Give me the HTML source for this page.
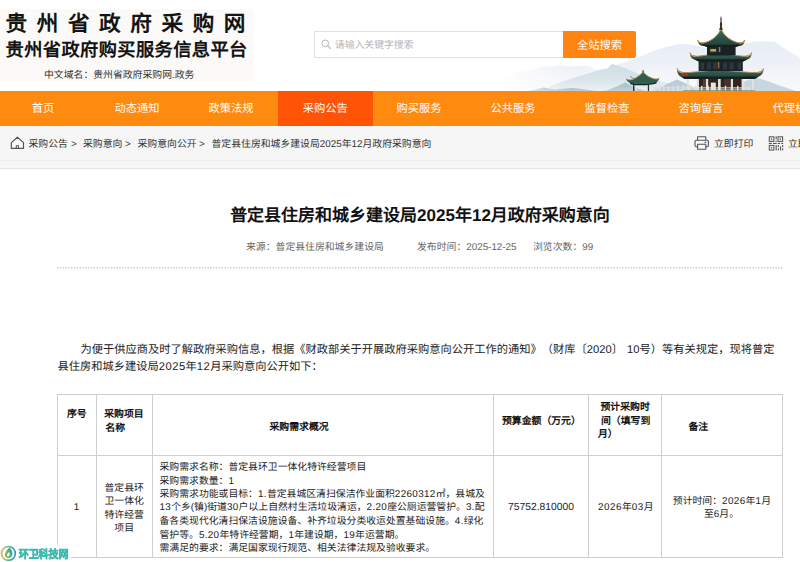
<!DOCTYPE html>
<html lang="zh-CN">
<head>
<meta charset="utf-8">
<title>普定县住房和城乡建设局2025年12月政府采购意向</title>
<style>
*{margin:0;padding:0;box-sizing:border-box;}
html,body{width:800px;height:562px;overflow:hidden;background:#fff;}
body{font-family:"Liberation Sans",sans-serif;color:#333;position:relative;text-rendering:geometricPrecision;text-spacing-trim:space-all;}
.abs{position:absolute;white-space:nowrap;}
/* header */
#hdr{position:absolute;left:0;top:0;width:800px;height:91px;background:#fff;overflow:hidden;}
#logobg{position:absolute;left:0;top:9px;width:253.5px;height:71.5px;background:#fbfaf8;}
#logo1{left:5.5px;top:9px;font-size:21.6px;font-weight:bold;color:#141414;letter-spacing:9.6px;line-height:30px;}
#logo2{left:5.5px;top:37px;font-size:18.2px;font-weight:bold;color:#141414;letter-spacing:0.44px;line-height:26px;}
#logo3{left:44px;top:68.5px;font-size:9.85px;color:#333;line-height:14px;}
#sbox{position:absolute;left:314px;top:31px;width:250px;height:27px;border:1px solid #dfe0e8;background:#fff;}
#sph{left:334.8px;top:39px;font-size:9.85px;color:#b4b5bd;line-height:14px;}
#sbtn{position:absolute;left:563px;top:31px;width:73px;height:26.5px;background:#ff8412;color:#fff;font-size:11.3px;line-height:30px;text-align:center;border-radius:0 2px 2px 0;overflow:hidden;}
/* nav */
#nav{position:absolute;left:0;top:91px;width:800px;height:35px;background:#ff8a10;overflow:hidden;}
#nav .it{position:absolute;top:0;height:35px;line-height:36px;color:#fff;font-size:11.25px;text-align:center;white-space:nowrap;}
#nav .act{background:#ff5306;}
/* crumb */
#crumb{position:absolute;left:0;top:126px;width:800px;height:35px;background:#f6f6f6;}
#gap{position:absolute;left:0;top:160px;width:800px;height:9px;background:#f6f6f6;border-top:1px solid #ececec;border-bottom:1px solid #e4e4e4;}
.ct{font-size:9.85px;color:#333;line-height:14px;top:138px;}
/* content */
#title{left:0;width:840px;text-align:center;top:205px;font-size:17px;font-weight:bold;color:#111;line-height:22px;}
.meta{font-size:9.85px;color:#666;line-height:14px;top:241px;}
#dash{position:absolute;left:57px;top:267.4px;width:726px;height:1px;background:repeating-linear-gradient(90deg,#cfcfcf 0,#cfcfcf 1.5px,transparent 1.5px,transparent 2.85px);}
.p{font-size:11.25px;color:#222;line-height:17px;}
/* table */
.vl,.hl{position:absolute;background:#cfcfcf;}
.vl{width:1px;top:394px;height:163px;}
.hl{height:1px;left:57px;width:726px;}
.th{font-size:9.86px;font-weight:bold;color:#111;line-height:14px;}
.td{font-size:9.86px;color:#222;line-height:13.45px;}
.dg{letter-spacing:0.35px;}
</style>
</head>
<body>
<div id="hdr">
  <div id="logobg"></div>
  <div class="abs" id="logo1">贵州省政府采购网</div>
  <div class="abs" id="logo2">贵州省政府购买服务信息平台</div>
  <div class="abs" id="logo3">中文域名：贵州省政府采购网.政务</div>
  <div id="sbox"></div>
  <svg class="abs" style="left:320px;top:38px;" width="12" height="12" viewBox="0 0 12 12"><circle cx="5.3" cy="5.4" r="3.4" fill="none" stroke="#b9bac2" stroke-width="1"/><path d="M7.8 7.9 L10.4 10.5" stroke="#b9bac2" stroke-width="1.1" stroke-linecap="round"/></svg>
  <div class="abs" id="sph">请输入关键字搜索</div>
  <!--SCENE_START--><svg class="abs" style="left:440px;top:0;" width="360" height="91" viewBox="440 0 360 91">
<defs>
<linearGradient id="gfar" x1="0" y1="0" x2="0" y2="1"><stop offset="0" stop-color="#e8edf6"/><stop offset="0.5" stop-color="#eef2f7"/><stop offset="1" stop-color="#f9fafc"/></linearGradient>
<linearGradient id="gmid" x1="0" y1="0" x2="0" y2="1"><stop offset="0" stop-color="#cedde6"/><stop offset="0.6" stop-color="#dae5eb"/><stop offset="1" stop-color="#ecf1f4"/></linearGradient>
<linearGradient id="gfr" x1="0" y1="0" x2="0" y2="1"><stop offset="0" stop-color="#a6bcc9"/><stop offset="1" stop-color="#c2d1da"/></linearGradient>
<linearGradient id="gleft" x1="0" y1="0" x2="1" y2="0"><stop offset="0" stop-color="#fff" stop-opacity="1"/><stop offset="1" stop-color="#fff" stop-opacity="0"/></linearGradient>
<linearGradient id="roof" x1="0" y1="0" x2="0" y2="1"><stop offset="0" stop-color="#3f6b5a"/><stop offset="1" stop-color="#1f3f36"/></linearGradient>
</defs>
<!-- far mountains -->
<path d="M496 91 L496 79 C508 75 518 72.5 527.5 70 L538 68 L547.5 66.2 L554 66.5 L560 65 L566 66 L572.5 66.2 L582 65.8 L590 66.2 L595 70 L603 69 L612 66 L625 62 L637.5 57.5 C650 52 668 45 682 43.7 C692 43.8 700 46.5 710 49 L722 50.5 C732 49 740 45 746 43.2 L755 41.6 L765 41.6 L774.7 42.1 L782 47 L792 53 L800 57.7 L800 91 Z" fill="url(#gfar)"/>
<!-- mid mountains -->
<path d="M545 91 L552.5 85 L570 79 L588 73.5 L600 70 L607.5 68.7 L610 65.5 L612.5 63.7 L616 65.5 L620 66.2 L630 70 L641 75 L655 80 L665 82.5 L680 86 L700 91 Z" fill="url(#gmid)"/>
<path d="M728 91 L738 84 L748 80 L757.3 78 L766 80.5 L778 85 L793 90 L796 91 Z" fill="#c8d6df"/>
<!-- front hills -->
<path d="M528 91 L532.5 90.3 L538 88.8 L543.7 87.5 L550 88.8 L555 89.5 L563 88.8 L572.5 88 L582 89 L590 90 L596 91 Z" fill="url(#gfr)"/>
<path d="M603 91 L607.5 90.2 L614 87.5 L620 85 L625 82.5 L631 85.5 L638 88.5 L646 91 Z" fill="url(#gfr)"/>
<path d="M652 91 L662 86.5 L670 82.5 L677 79.5 L684 82.5 L694 87.5 L702 91 Z" fill="#bccdd8"/>
<!-- fade on far left -->
<rect x="495" y="59.5" width="70" height="31.5" fill="url(#gleft)"/>
<!-- small pavilion -->
<g>
<rect x="633" y="84" width="1.4" height="7" fill="#2a3432"/><rect x="635.3" y="84.2" width="1.5" height="6.8" fill="#e6e3dc"/>
<rect x="647.8" y="84" width="1.3" height="7" fill="#2a3432"/><rect x="651" y="84.2" width="1.4" height="6.8" fill="#e6e3dc"/>
<path d="M629 81.6 C634 84.8 652 84.6 657.3 80.8 L656.3 83.6 C650 85.8 636 85.9 630.5 84.2 Z" fill="#172322"/>
<path d="M626.1 78.9 C628.5 80.6 632 80.2 635 78.4 C638.5 76.3 641.3 74.3 642.6 72.6 L643.1 70.3 L643.7 72.6 C645.5 75 649.5 77.6 653.5 78.7 C655.8 79.3 657.8 79.2 659.2 78.2 C658.9 80.2 657.6 81.6 655.6 82.4 C649 84.4 637 84.6 631 83 C628.3 82.2 626.6 80.8 626.1 78.9 Z" fill="#2f5e4f"/>
<path d="M626.1 78.9 C628.5 80.6 632 80.2 635 78.4 C638.5 76.3 641.3 74.3 642.6 72.6 L643.1 70.3 L643.7 72.6 C645.5 75 649.5 77.6 653.5 78.7 C655.8 79.3 657.8 79.2 659.2 78.2" fill="none" stroke="#b08552" stroke-width="0.9"/>
<path d="M630.4 76 C631.3 77.8 633 78.6 635 78.4" fill="none" stroke="#8a6a44" stroke-width="0.9"/>
<path d="M642.6 70.6 L643.6 70.6 L643.5 72.8 L642.7 72.8 Z" fill="#6a4a38"/>
</g>
<!-- pagoda -->
<g>
<!-- ground floor body -->
<rect x="698.8" y="77" width="43" height="11" fill="#33241f"/><rect x="698.8" y="87.5" width="43" height="3.5" fill="#5b5550"/><rect x="710.8" y="82.6" width="5" height="8" fill="#e9e7e2"/>
<rect x="703" y="78" width="4" height="12.5" fill="#5a3a30"/><rect x="724" y="78" width="6" height="12.5" fill="#4a3028"/>
<!-- pillars -->
<g fill="#e4e1da"><rect x="686.9" y="78.5" width="1.9" height="12.5"/><rect x="696.7" y="78" width="2.1" height="13"/><rect x="706" y="77.5" width="2.2" height="13.5"/><rect x="718" y="76.5" width="2.7" height="14.5"/><rect x="730.8" y="77.5" width="2.2" height="13.5"/><rect x="741.7" y="78" width="2.2" height="13"/><rect x="752" y="78.5" width="2" height="12.5"/></g>
<!-- bottom roof -->
<path d="M677.3 69 C679 72.5 684 73 690 72.4 C700 71.6 712 70.8 718.5 68.3 C725 70.8 738 71.6 750 72.4 C756 73 761.5 72.5 763.3 69.3 C763.6 72.5 762 75 759 76.5 L755 78.6 L684 78.6 L680.5 76.5 C678 75 677 72.5 677.3 69 Z" fill="url(#roof)"/>
<path d="M677.3 69 C679 72.5 684 73 690 72.4 C700 71.6 712 70.8 718.5 68.3 C725 70.8 738 71.6 750 72.4 C756 73 761.5 72.5 763.3 69.3" fill="none" stroke="#b48a55" stroke-width="1"/>
<path d="M681 76.4 L758.5 76.4 L755 79 L684.5 79 Z" fill="#15201f"/>
<rect x="682.6" y="73.6" width="1.6" height="2.6" fill="#c63a2c"/><rect x="685.6" y="73.6" width="1.6" height="2.6" fill="#c63a2c"/>
<!-- middle floor body -->
<rect x="698.6" y="60" width="44.2" height="11" fill="#1a2327"/>
<g fill="#2b363d"><rect x="700.5" y="62.5" width="3.6" height="7"/><rect x="707" y="62.5" width="4" height="7"/><rect x="713" y="62.5" width="4" height="7"/><rect x="723" y="62.5" width="4" height="7"/><rect x="729.5" y="62.5" width="4" height="7"/><rect x="737.5" y="62.5" width="3.6" height="7"/></g>
<rect x="717.8" y="62" width="1.6" height="6.5" fill="#8a6a3a"/>
<!-- middle roof -->
<path d="M690.2 53.3 C691.3 56 695 56.6 700 56 C707 55.2 714 54.2 719.2 52 C724.5 54.2 733 55.2 741 56 C746 56.6 750 56 751.4 53.3 C751.7 56.5 750.2 58.5 747.5 59.6 L743.5 61.3 L698.5 61.3 L694 59.6 C691.3 58.5 689.9 56.5 690.2 53.3 Z" fill="url(#roof)"/>
<path d="M690.2 53.3 C691.3 56 695 56.6 700 56 C707 55.2 714 54.2 719.2 52 C724.5 54.2 733 55.2 741 56 C746 56.6 750 56 751.4 53.3" fill="none" stroke="#b48a55" stroke-width="1"/>
<path d="M694.5 59.3 L747 59.3 L743.5 61.6 L698.5 61.6 Z" fill="#15201f"/>
<!-- top floor body -->
<rect x="707" y="45" width="28.6" height="10.5" fill="#182126"/>
<rect x="709.6" y="48.2" width="7.2" height="4.2" fill="#26302f"/><rect x="710.3" y="49" width="5.8" height="2.6" fill="#c9a23f"/>
<rect x="718.8" y="46" width="1.5" height="6" fill="#a07a40"/>
<!-- top roof -->
<path d="M697.8 40.6 C699.5 43 702.5 43.4 706 42.3 C712 40.4 717 36.5 720 31 L721 28.5 L722 31 C725 36.5 730.5 40.4 736.5 42.3 C740 43.4 743 43 744.6 40.6 C744.6 43.3 743.2 45 741 45.8 L736.5 46.6 L706.5 46.6 L701.5 45.8 C699.3 45 697.8 43.3 697.8 40.6 Z" fill="url(#roof)"/>
<path d="M697.8 40.6 C699.5 43 702.5 43.4 706 42.3 C712 40.4 717 36.5 720 31 L721 28.5 L722 31 C725 36.5 730.5 40.4 736.5 42.3 C740 43.4 743 43 744.6 40.6" fill="none" stroke="#b48a55" stroke-width="1"/>
<path d="M702 44.8 L740.5 44.8 L736.5 46.9 L706.5 46.9 Z" fill="#15201f"/>
<g fill="none" stroke="#c0935a" stroke-width="1.1" stroke-linecap="round">
<path d="M677.2 68.6 C677.6 71 679.5 72.6 683 72.8"/><path d="M763.4 68.9 C763 71.2 761 72.6 757.5 72.8"/>
<path d="M690.1 52.9 C690.5 55 692.3 56.3 695.5 56.4"/><path d="M751.5 52.9 C751.1 55 749.3 56.3 746 56.4"/>
<path d="M697.7 40.2 C698.2 42.2 700 43.3 703 43"/><path d="M744.7 40.2 C744.2 42.2 742.4 43.3 739.5 43"/>
</g>
<!-- spire -->
<path d="M721 15.5 L721.7 19 L721.5 21 L722.2 24 L721.9 26.5 L722.8 30 L719.2 30 L720.1 26.5 L719.8 24 L720.5 21 L720.3 19 Z" fill="#3a3330"/>
</g>
<!-- balustrade -->
<g fill="#e2e1de">
<rect x="652" y="87.4" width="98" height="0.9"/><rect x="652" y="89.5" width="98" height="0.9"/>
<rect x="654" y="86.2" width="1.3" height="4.8"/><rect x="658.6" y="86.2" width="1.3" height="4.8"/><rect x="663.2" y="86" width="1.3" height="5"/><rect x="667.8" y="86" width="1.3" height="5"/><rect x="672.4" y="85.8" width="1.3" height="5.2"/><rect x="677" y="85.4" width="1.6" height="5.6"/><rect x="682.4" y="85" width="1.7" height="6"/><rect x="688.6" y="84.6" width="1.9" height="6.4"/><rect x="694.6" y="85.6" width="1.5" height="5.4"/><rect x="701" y="85.8" width="1.5" height="5.2"/><rect x="707.5" y="85.8" width="1.4" height="5.2"/><rect x="713.4" y="85.8" width="1.4" height="5.2"/><rect x="724.8" y="85.8" width="1.4" height="5.2"/><rect x="731" y="85.8" width="1.4" height="5.2"/><rect x="737" y="85.8" width="1.4" height="5.2"/><rect x="743" y="86" width="1.4" height="5"/><rect x="748.6" y="86.2" width="1.3" height="4.8"/>
</g>
<rect x="683" y="90.1" width="72" height="0.9" fill="#6f8f5a" opacity="0.7"/>
</svg>
<!--SCENE_END-->
  <div id="sbtn">全站搜索</div>
</div>
<div id="nav">
  <div class="it" style="left:-4px;width:94px;">首页</div>
  <div class="it" style="left:90px;width:94px;">动态通知</div>
  <div class="it" style="left:184px;width:94px;">政策法规</div>
  <div class="it act" style="left:278px;width:94.5px;">采购公告</div>
  <div class="it" style="left:372px;width:94px;">购买服务</div>
  <div class="it" style="left:466px;width:94px;">公共服务</div>
  <div class="it" style="left:560px;width:94px;">监督检查</div>
  <div class="it" style="left:654px;width:94px;">咨询留言</div>
  <div class="it" style="left:748px;width:94px;">代理机构</div>
</div>
<div id="crumb"></div>
<div id="gap"></div>
<!--ICONS_START-->
<svg class="abs" style="left:9px;top:135px;" width="17" height="16" viewBox="9 135 17 16" fill="none" stroke="#50555c" stroke-width="1.15" stroke-linejoin="round" stroke-linecap="round">
<path d="M11.3 142.6 L17.4 137.2 L23.5 142.6 L23.5 148.4 L11.3 148.4 Z"/>
<path d="M16.3 148.4 L16.3 145.6 L18.5 145.6 L18.5 148.4" stroke-width="1"/>
</svg>
<svg class="abs" style="left:693px;top:135px;" width="17" height="16" viewBox="693 135 17 16" fill="none" stroke="#50555c" stroke-width="1.1" stroke-linejoin="round">
<path d="M697.6 140.2 L697.6 136.8 L705.8 136.8 L705.8 140.2"/>
<rect x="695" y="140.2" width="13.4" height="6.6" rx="1.2"/>
<rect x="697.6" y="144.3" width="8.2" height="5" fill="#f6f6f6"/>
<path d="M704.8 142.3 L706 142.3" stroke-linecap="round"/>
</svg>
<svg class="abs" style="left:768px;top:135px;" width="16" height="16" viewBox="768 135 16 16" fill="none" stroke="#50555c" stroke-width="1.05">
<rect x="769.3" y="136.8" width="4.6" height="4.6"/><rect x="778" y="136.8" width="4.6" height="4.6"/><rect x="769.3" y="145.4" width="4.6" height="4.6"/>
<g fill="#50555c" stroke="none"><rect x="770.9" y="138.4" width="1.4" height="1.4"/><rect x="779.6" y="138.4" width="1.4" height="1.4"/><rect x="770.9" y="147" width="1.4" height="1.4"/>
<rect x="775.6" y="136.3" width="1.1" height="3"/><rect x="775.6" y="140.6" width="1.1" height="1.3"/>
<rect x="768.8" y="142.9" width="3" height="1.1"/><rect x="773" y="142.9" width="3.7" height="1.1"/><rect x="777.8" y="142.9" width="2.2" height="1.1"/><rect x="781.2" y="142.9" width="2" height="1.1"/>
<rect x="775.6" y="145" width="1.1" height="5.4"/><rect x="777.8" y="145" width="1.1" height="2.2"/><rect x="777.8" y="148.3" width="1.1" height="2.1"/><rect x="780" y="146.4" width="1.1" height="4"/><rect x="782.1" y="145" width="1.1" height="2.2"/><rect x="782.1" y="148.3" width="1.1" height="2.1"/></g>
</svg>
<!--ICONS_END-->
<div class="abs ct" style="left:28.5px;">采购公告</div>
<div class="abs ct" style="left:71px;">&gt;</div>
<div class="abs ct" style="left:83px;">采购意向</div>
<div class="abs ct" style="left:125px;">&gt;</div>
<div class="abs ct" style="left:137.5px;">采购意向公开</div>
<div class="abs ct" style="left:199px;">&gt;</div>
<div class="abs ct" style="left:211.5px;">普定县住房和城乡建设局2025年12月政府采购意向</div>
<div class="abs ct" style="left:714px;">立即打印</div>
<div class="abs ct" style="left:788px;">立即分享</div>

<div class="abs" id="title">普定县住房和城乡建设局2025年12月政府采购意向</div>
<div class="abs meta" style="left:246px;">来源：普定县住房和城乡建设局</div>
<div class="abs meta" style="left:417px;">发布时间：2025-12-25</div>
<div class="abs meta" style="left:533px;">浏览次数：99</div>
<svg class="abs" style="left:56px;top:265px;" width="728" height="6" viewBox="56 265 728 6"><line x1="56.8" y1="267.9" x2="783" y2="267.9" stroke="#c4c4c4" stroke-width="1.1" stroke-dasharray="1.42 1.42"/></svg>
<div class="abs p" style="left:80.5px;top:342px;">为便于供应商及时了解政府采购信息，根据《财政部关于开展政府采购意向公开工作的通知》（财库〔2020〕<span style="margin-left:4px">10号）等有关规定，现将普定</span></div>
<div class="abs p" style="left:57.5px;top:358.5px;">县住房和城乡建设局<span style="letter-spacing:0.45px">2025</span>年<span style="letter-spacing:0.45px">12</span>月采购意向公开如下：</div>

<!-- table grid -->
<div class="hl" style="top:394px;"></div>
<div class="hl" style="top:455px;"></div>
<div class="hl" style="top:556.5px;"></div>
<div class="vl" style="left:57px;"></div>
<div class="vl" style="left:96.3px;"></div>
<div class="vl" style="left:152px;"></div>
<div class="vl" style="left:493px;"></div>
<div class="vl" style="left:588.3px;"></div>
<div class="vl" style="left:661.3px;"></div>
<div class="vl" style="left:782.2px;"></div>
<!-- header cells -->
<div class="abs th" style="left:67px;top:408.0px;">序号</div>
<div class="abs th" style="left:104.2px;top:408.0px;">采购项目</div>
<div class="abs th" style="left:105.5px;top:421.8px;">名称</div>
<div class="abs th" style="left:269.5px;top:421.0px;">采购需求概况</div>
<div class="abs th" style="left:502px;top:414.7px;">预算金额（万元）</div>
<div class="abs th" style="left:600.5px;top:401.0px;">预计采购时</div>
<div class="abs th" style="left:601px;top:414.7px;">间（填写到</div>
<div class="abs th" style="left:598px;top:428.3px;">月）</div>
<div class="abs th" style="left:688.5px;top:421.0px;">备注</div>
<!-- data cells -->
<div class="abs td" style="left:73.7px;top:501.3px;">1</div>
<div class="abs td" style="left:96.3px;width:55.7px;text-align:center;top:481.8px;">普定县环<br>卫一体化<br>特许经营<br>项目</div>
<div class="abs td" id="bl0" style="left:159.5px;top:461.2px;">采购需求名称：普定县环卫一体化特许经营项目</div>
<div class="abs td" id="bl1" style="left:159.5px;top:474.6px;">采购需求数量：<span class="dg">1</span></div>
<div class="abs td" id="bl2" style="left:159.5px;top:488.1px;">采购需求功能或目标：<span class="dg">1.</span>普定县城区清扫保洁作业面积<span class="dg">2260312</span>㎡，县城及</div>
<div class="abs td" id="bl3" style="left:159.5px;top:500.5px;"><span class="dg">13</span>个乡(镇)街道<span class="dg">30</span>户以上自然村生活垃圾清运，<span class="dg">2.20</span>座公厕运营管护。<span class="dg">3.</span>配</div>
<div class="abs td" id="bl4" style="left:159.5px;top:515.0px;">备各类现代化清扫保洁设施设备、补齐垃圾分类收运处置基础设施。<span class="dg">4.</span>绿化</div>
<div class="abs td" id="bl5" style="left:159.5px;top:528.5px;">管护等。<span class="dg">5.20</span>年特许经营期，<span class="dg">1</span>年建设期，<span class="dg">19</span>年运营期。</div>
<div class="abs td" id="bl6" style="left:159.5px;top:541.9px;">需满足的要求：满足国家现行规范、相关法律法规及验收要求。</div>
<div class="abs td" style="left:508px;top:501.3px;font-size:10.3px;">75752.810000</div>
<div class="abs td" style="left:598px;top:501.3px;"><span class="dg" style="letter-spacing:.5px">2026</span>年<span class="dg" style="letter-spacing:.5px">03</span>月</div>
<div class="abs td" style="left:672.8px;top:494.6px;">预计时间：<span class="dg" style="letter-spacing:.4px">2026</span>年<span class="dg">1</span>月</div>
<div class="abs td" style="left:704px;top:508.3px;">至6月。</div>
<!--WM_START-->
<div style="position:absolute;left:0;top:545px;width:71px;height:17px;background:#fff;opacity:0.9;filter:blur(1.2px);"></div>
<svg class="abs" style="left:0;top:544px;" width="18" height="18" viewBox="0 544 18 18">
<defs><linearGradient id="wmr" x1="0" y1="0" x2="1" y2="0"><stop offset="0" stop-color="#f4a261"/><stop offset="0.3" stop-color="#9ccc65"/><stop offset="0.6" stop-color="#35b8a6"/><stop offset="1" stop-color="#3f8fd2"/></linearGradient>
<linearGradient id="wml" x1="0" y1="1" x2="1" y2="0"><stop offset="0" stop-color="#8bc34a"/><stop offset="1" stop-color="#26a69a"/></linearGradient></defs>
<circle cx="8.4" cy="553.4" r="6.9" fill="#fff" stroke="url(#wmr)" stroke-width="1.7"/>
<path d="M9.6 547.6 C12.6 550.6 13.2 554.2 11.6 556.6 C10 558.9 6.6 558.8 5.3 556.6 C4 554.2 6.2 550.4 9.6 547.6 Z" fill="url(#wml)"/>
<path d="M9 552 C10 553.4 9.9 555.2 8.7 556.2 C7.7 556.8 6.8 556.2 6.9 555.1 C7 554 8 553 9 552 Z" fill="#fff"/>
</svg>
<div class="abs" style="left:18.8px;top:548.6px;font-size:10px;font-weight:bold;color:#3db9b0;line-height:14px;letter-spacing:-0.1px;-webkit-text-stroke:0.5px #3db9b0;transform:scaleY(1.13);transform-origin:50% 50%;">环卫科技网</div>
<!--WM_END-->
</body>
</html>
